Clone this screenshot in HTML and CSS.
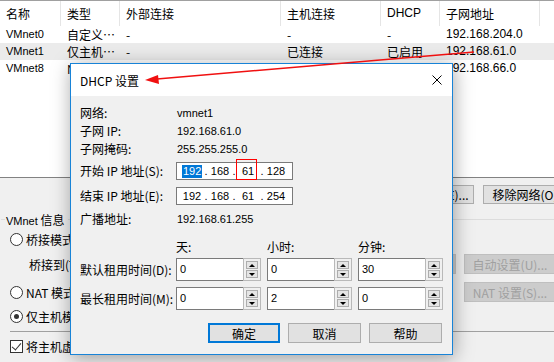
FILE: index.html
```html
<!DOCTYPE html>
<html lang="zh-CN">
<head>
<meta charset="UTF-8">
<title>虚拟网络编辑器 - DHCP 设置</title>
<link rel="stylesheet" href="styles.css">
</head>
<body>
<div class="app">
  <div class="net-table">
    <div class="row head">
      <div class="cell c1">名称</div>
      <div class="cell c2">类型</div>
      <div class="cell c3">外部连接</div>
      <div class="cell c4">主机连接</div>
      <div class="cell c5 lat">DHCP</div>
      <div class="cell c6">子网地址</div>
      <div class="cell c7"></div>
    </div>
    <div class="row">
      <div class="cell c1 name">VMnet0</div>
      <div class="cell c2">自定义…</div>
      <div class="cell c3">-</div>
      <div class="cell c4">-</div>
      <div class="cell c5">-</div>
      <div class="cell c6 lat">192.168.204.0</div>
    </div>
    <div class="row sel-row">
      <div class="cell c1 name">VMnet1</div>
      <div class="cell c2">仅主机…</div>
      <div class="cell c3">-</div>
      <div class="cell c4">已连接</div>
      <div class="cell c5">已启用</div>
      <div class="cell c6 lat">192.168.61.0</div>
    </div>
    <div class="row">
      <div class="cell c1 name">VMnet8</div>
      <div class="cell c2">NAT 模式</div>
      <div class="cell c3">NAT 模式</div>
      <div class="cell c4">已连接</div>
      <div class="cell c5">已启用</div>
      <div class="cell c6 lat">192.168.66.0</div>
    </div>
  </div>

  <div class="panel">
    <div class="btn-row">
      <button class="btn">添加网络(E)...</button>
      <button class="btn">移除网络(O)</button>
    </div>

    <div class="group-title">
      <span class="tick"></span>
      <span class="gt"><span class="name">VMnet</span> 信息</span>
      <span class="gline"></span>
    </div>

    <div class="opt"><span class="radio"></span>桥接模式(将虚拟机直接连接到外部网络)(B)</div>
    <div class="bridge-row">
      <span class="bl">桥接到(T):</span>
      <span class="combo"></span>
      <button class="btn side dis">自动设置(U)...</button>
    </div>
    <div class="opt nat">
      <span class="radio"></span>NAT 模式(与虚拟机共享主机的 IP 地址)(N)
      <button class="btn side dis">NAT 设置(S)...</button>
    </div>
    <div class="opt"><span class="radio on"></span>仅主机模式(在专用网络内连接虚拟机)(H)</div>
    <div class="sep"></div>
    <div class="opt"><span class="check"></span>将主机虚拟适配器连接到此网络(V)</div>
  </div>
</div>

<div class="dialog">
  <div class="titlebar">
    <span class="title">DHCP 设置</span>
    <svg class="close" width="10" height="10" viewBox="0 0 10 10"><path d="M0.5 0.5L9.5 9.5M9.5 0.5L0.5 9.5" stroke="#000" stroke-width="1" fill="none"/></svg>
  </div>
  <div class="dlg-body">
    <div class="info">
      <span class="lbl">网络:</span><span class="val">vmnet1</span>
      <span class="lbl">子网 IP:</span><span class="val">192.168.61.0</span>
      <span class="lbl">子网掩码:</span><span class="val">255.255.255.0</span>
      <span class="lbl">开始 IP 地址(S):</span>
      <div class="ipbox">
        <span class="oct"><span class="hl">192</span></span><span class="dot">.</span>
        <span class="oct">168</span><span class="dot">.</span>
        <span class="oct">61</span><span class="dot">.</span>
        <span class="oct">128</span>
        <span class="mark"></span>
      </div>
      <span class="lbl">结束 IP 地址(E):</span>
      <div class="ipbox">
        <span class="oct">192</span><span class="dot">.</span>
        <span class="oct">168</span><span class="dot">.</span>
        <span class="oct">61</span><span class="dot">.</span>
        <span class="oct">254</span>
      </div>
      <span class="lbl">广播地址:</span><span class="val">192.168.61.255</span>
    </div>

    <div class="lease">
      <span></span>
      <span class="colh">天:</span>
      <span class="colh">小时:</span>
      <span class="colh">分钟:</span>

      <span class="lbl rowl">默认租用时间(D):</span>
      <div class="spin"><span class="sv">0</span><span class="arrows"><i class="up"></i><i class="dn"></i></span></div>
      <div class="spin"><span class="sv">0</span><span class="arrows"><i class="up"></i><i class="dn"></i></span></div>
      <div class="spin"><span class="sv">30</span><span class="arrows"><i class="up"></i><i class="dn"></i></span></div>

      <span class="lbl rowl">最长租用时间(M):</span>
      <div class="spin"><span class="sv">0</span><span class="arrows"><i class="up"></i><i class="dn"></i></span></div>
      <div class="spin"><span class="sv">2</span><span class="arrows"><i class="up"></i><i class="dn"></i></span></div>
      <div class="spin"><span class="sv">0</span><span class="arrows"><i class="up"></i><i class="dn"></i></span></div>
    </div>

    <div class="actions">
      <button class="dbtn default">确定</button>
      <button class="dbtn">取消</button>
      <button class="dbtn">帮助</button>
    </div>
  </div>
</div>

<svg class="annot" width="554" height="362" viewBox="0 0 554 362">
  <line x1="474" y1="52" x2="154" y2="79.3" stroke="#f01010" stroke-width="1.5"/>
  <polygon points="145,80 158,75 159,84" fill="#f01010"/>
</svg>
</body>
</html>
```
FILE: styles.css
```css
* {
    box-sizing: border-box;
}
body {
    margin: 0;
    width: 554px;
    height: 362px;
    overflow: hidden;
    position: relative;
    background-color: #f0f0f0;
    font-family: "Noto Sans CJK SC", "Liberation Sans", sans-serif;
    font-size: 12px;
    color: #000;
}
.app {
    width: 577px;
}
.lat {
    font-family: "Liberation Sans", "Noto Sans CJK SC", sans-serif;
}

/* network list */
.net-table {
    background-color: #fff;
    height: 178px;
    border-top: 1px solid #a0a0a0;
    border-bottom: 1px solid #828282;
}
.row {
    display: flex;
    height: 17px;
    line-height: 17px;
}
.row.head {
    height: 25px;
    line-height: 25px;
}
.sel-row {
    background-color: #ebebeb;
}
.cell {
    padding-left: 6px;
    white-space: nowrap;
    overflow: hidden;
}
.head .cell {
    border-right: 1px solid #e5e5e5;
}
.name {
    font-family: "Liberation Sans", sans-serif;
    font-size: 11px;
}
.c1 { width: 61px; }
.c2 { width: 59px; }
.c3 { width: 161px; }
.c4 { width: 100px; }
.c5 { width: 59px; }
.c6 { width: 100px; }
.c7 { flex: 1; }

/* lower panel */
.btn {
    font: inherit;
    height: 19px;
    width: 84px;
    padding: 0;
    background-color: #e1e1e1;
    border: 1px solid #adadad;
    color: #000;
    white-space: nowrap;
}
.btn-row {
    display: flex;
    justify-content: flex-end;
    gap: 9px;
    padding-right: 10px;
    margin-top: 7px;
}
.group-title {
    display: flex;
    align-items: center;
    height: 12px;
    margin-top: 9px;
}
.tick {
    width: 4px;
    height: 1px;
    margin-left: 1px;
    background-color: #dcdcdc;
}
.gt {
    padding: 0 3px 0 1px;
    white-space: nowrap;
}
.gline {
    flex: 1;
    height: 1px;
    background-color: #dcdcdc;
}
.opt {
    display: flex;
    align-items: center;
    height: 18px;
    margin-top: 5px;
    padding-left: 10px;
    white-space: nowrap;
}
.radio {
    width: 13px;
    height: 13px;
    margin-right: 3px;
    border: 1px solid #333;
    border-radius: 50%;
    background-color: #fff;
    position: relative;
    flex: none;
}
.radio.on::after {
    content: "";
    position: absolute;
    left: 3px;
    top: 3px;
    width: 5px;
    height: 5px;
    border-radius: 50%;
    background-color: #333;
}
.check {
    width: 13px;
    height: 13px;
    margin-right: 3px;
    border: 1px solid #333;
    background-color: #fff;
    position: relative;
    flex: none;
}
.check::after {
    content: "";
    position: absolute;
    left: 3px;
    top: 0;
    width: 4px;
    height: 8px;
    border-right: 1.5px solid #333;
    border-bottom: 1.5px solid #333;
    transform: rotate(40deg);
}
.bridge-row {
    display: flex;
    align-items: center;
    height: 20px;
    margin-top: 6px;
    padding: 0 21px 0 29px;
    white-space: nowrap;
}
.combo {
    flex: 1;
    height: 20px;
    margin: 0 8px 0 4px;
    background-color: #cccccc;
    border: 1px solid #c4c4c4;
}
.btn.side {
    width: 92px;
    height: 20px;
}
.btn.dis {
    background-color: #cccccc;
    border-color: #bfbfbf;
    color: #a0a0a0;
}
.opt.nat {
    height: 20px;
    margin-top: 8px;
    padding-right: 21px;
}
.opt.nat .btn {
    margin-left: auto;
}
.sep {
    height: 1px;
    margin: 6px 0 0 10px;
    background-color: #a0a0a0;
}

/* dhcp dialog */
.dialog {
    position: absolute;
    left: 70px;
    top: 63px;
    width: 383px;
    height: 292px;
    border: 1px solid #1883d7;
    background-color: #f0f0f0;
    box-shadow: 1px 3px 18px rgba(0, 0, 0, 0.35);
}
.titlebar {
    height: 32px;
    background-color: #fff;
    display: flex;
    align-items: center;
    justify-content: space-between;
    padding: 0 10px 0 9px;
}
.title {
    font-size: 12px;
}
.close {
    display: block;
}
.dlg-body {
    padding: 8px 9px 0 9px;
}
.info {
    display: grid;
    grid-template-columns: 96px 117px;
    grid-template-rows: 18px 18px 18px 22px 25px 23px;
    align-items: end;
}
.lbl {
    line-height: 18px;
    white-space: nowrap;
}
.val {
    font-family: "Liberation Sans", sans-serif;
    font-size: 11px;
    line-height: 18px;
    padding-left: 1px;
}
.ipbox {
    position: relative;
    display: flex;
    align-items: center;
    height: 18px;
    padding-left: 5px;
    border: 1px solid #7a7a7a;
    background-color: #fff;
    font-family: "Liberation Sans", sans-serif;
    font-size: 11px;
}
.oct {
    width: 20px;
    text-align: center;
}
.dot {
    width: 8px;
    text-align: center;
}
.hl {
    display: inline-block;
    line-height: 13px;
    padding: 0 1px;
    background-color: #0078d7;
    color: #fff;
}
.mark {
    position: absolute;
    left: 59px;
    top: -4px;
    width: 21px;
    height: 21px;
    border: 1px solid #ff0000;
}
.lease {
    display: grid;
    grid-template-columns: 90px 85px 85px 85px;
    grid-template-rows: 18px 25px 29px;
    column-gap: 6px;
    align-items: end;
    margin-top: 10px;
}
.colh {
    line-height: 18px;
}
.lbl.rowl {
    line-height: 23px;
}
.spin {
    display: flex;
    height: 23px;
}
.sv {
    flex: 1;
    padding: 1px 0 0 3px;
    line-height: 18px;
    font-family: "Liberation Sans", sans-serif;
    font-size: 11px;
    background-color: #fff;
    border: 1px solid #7a7a7a;
    border-right: none;
}
.arrows {
    width: 18px;
    display: flex;
    flex-direction: column;
    gap: 1px;
    padding: 2px;
    border: 1px solid #b9b9b9;
    background-color: #f0f0f0;
}
.arrows i {
    flex: 1;
    display: flex;
    align-items: center;
    justify-content: center;
    border: 1px solid #adadad;
    background-color: #e5e5e5;
}
.arrows i::after {
    content: "";
    border-left: 3px solid transparent;
    border-right: 3px solid transparent;
}
.arrows .up::after {
    border-bottom: 3px solid #000;
}
.arrows .dn::after {
    border-top: 3px solid #000;
}
.actions {
    display: flex;
    justify-content: flex-end;
    gap: 8px;
    margin-top: 13px;
    padding-right: 1px;
}
.dbtn {
    font: inherit;
    width: 73px;
    height: 20px;
    padding: 0;
    background-color: #e1e1e1;
    border: 1px solid #adadad;
    color: #000;
}
.dbtn.default {
    width: 72px;
    border: 2px solid #0078d7;
}

/* red annotation drawn on top of the screenshot */
.annot {
    position: absolute;
    left: 0;
    top: 0;
    pointer-events: none;
}
```
